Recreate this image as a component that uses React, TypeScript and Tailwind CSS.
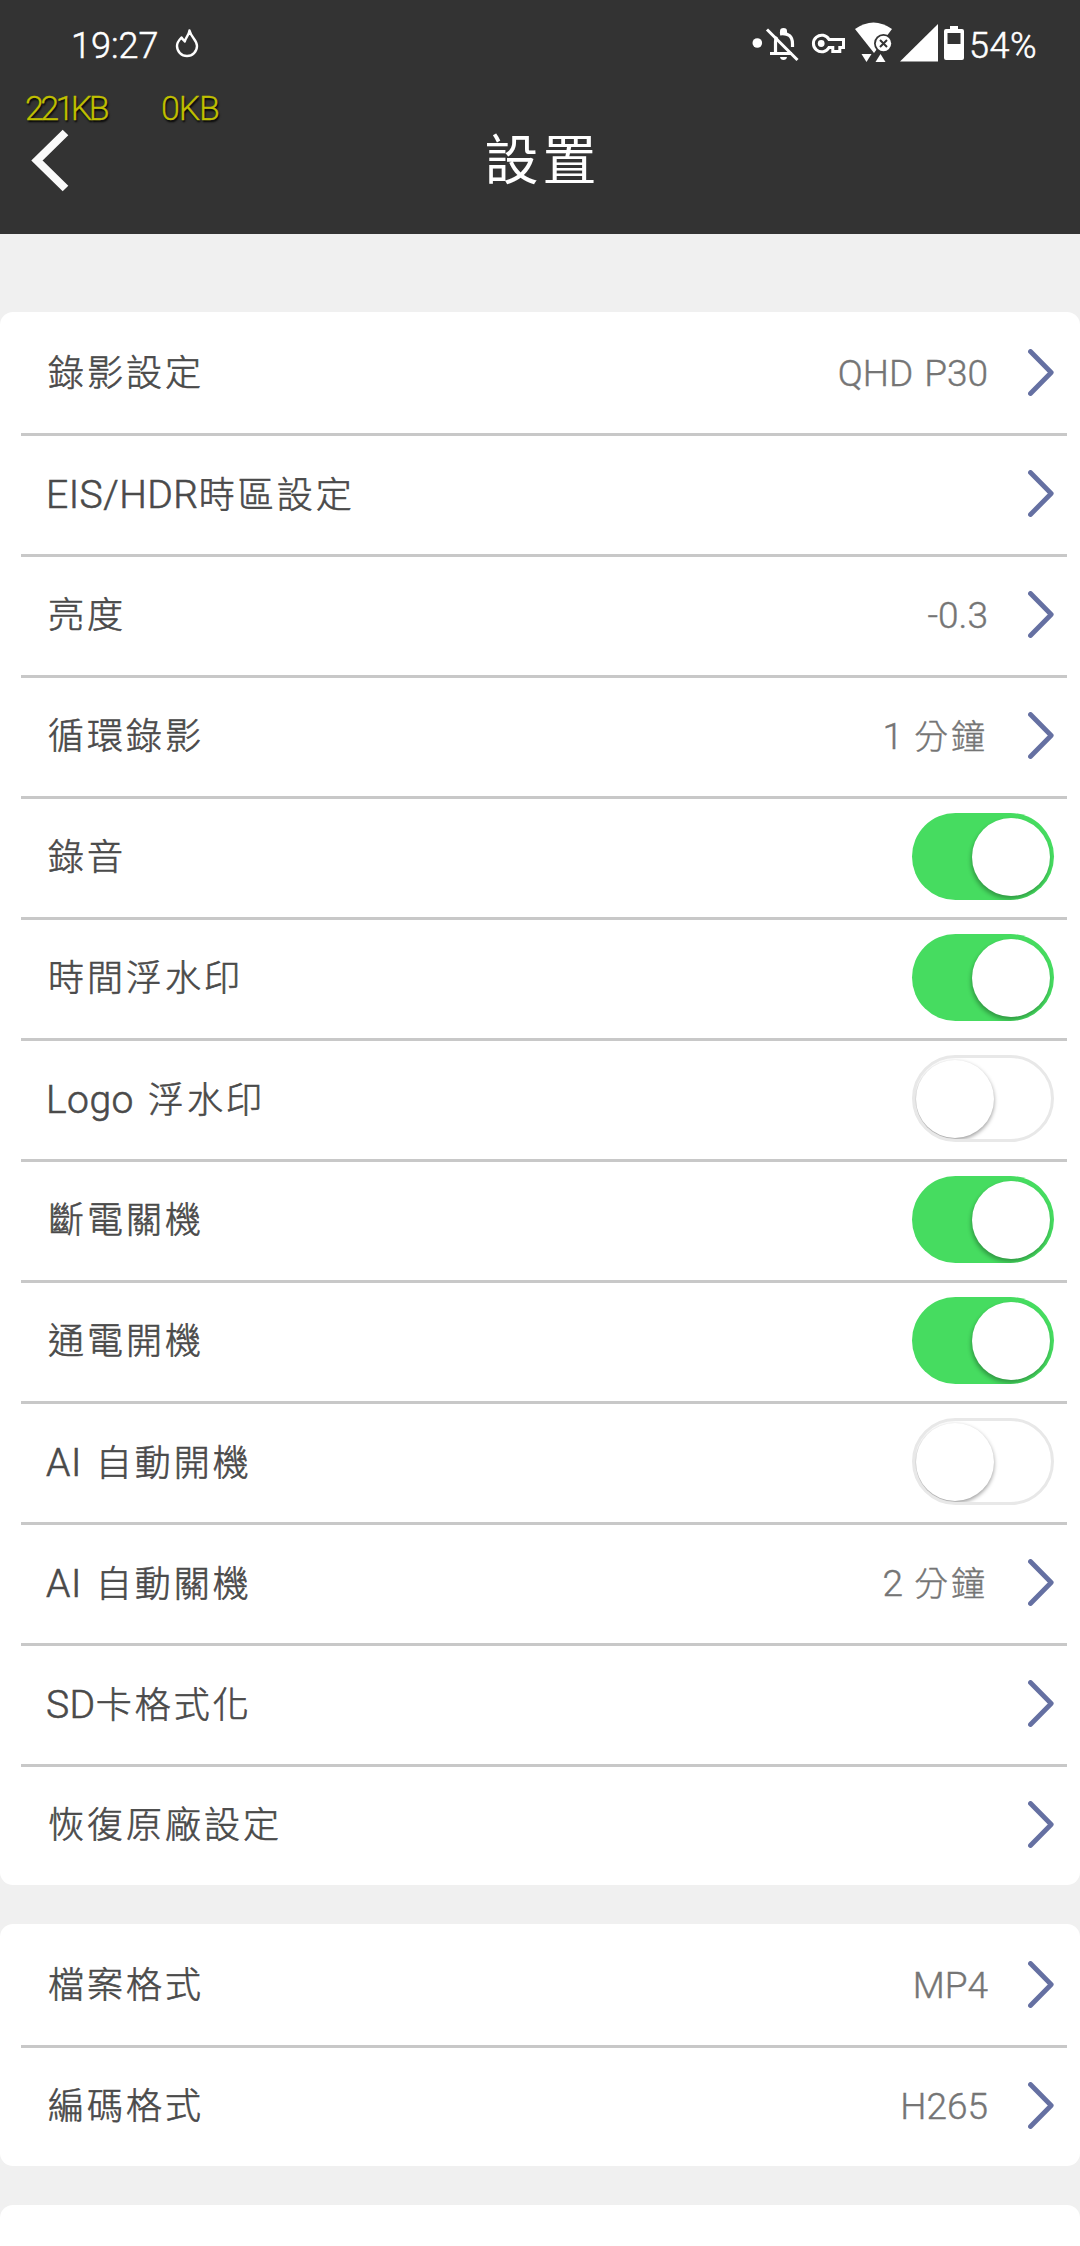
type Row = {
  label: string;
  value?: string;
  on?: boolean;
};

const recordRows: Row[] = [
  { label: "錄影設定", value: "QHD P30" },
  { label: "EIS/HDR時區設定" },
  { label: "亮度", value: "-0.3" },
  { label: "循環錄影", value: "1 分鐘" },
  { label: "錄音", on: true },
  { label: "時間浮水印", on: true },
  { label: "Logo 浮水印", on: false },
  { label: "斷電關機", on: true },
  { label: "通電開機", on: true },
  { label: "AI 自動開機", on: false },
  { label: "AI 自動關機", value: "2 分鐘" },
  { label: "SD卡格式化" },
  { label: "恢復原廠設定" },
];

const formatRows: Row[] = [
  { label: "檔案格式", value: "MP4" },
  { label: "編碼格式", value: "H265" },
];

// Latin runs are set a little larger and tighter than the CJK ones
function MixedText({
  text,
  latin,
  cjk,
}: {
  text: string;
  latin: string;
  cjk: string;
}) {
  const runs = text.match(/[\x00-\x7f]+|[^\x00-\x7f]+/g) ?? [];
  return (
    <>
      {runs.map((run, i) => (
        <span key={i} className={run.charCodeAt(0) < 128 ? latin : cjk}>
          {run}
        </span>
      ))}
    </>
  );
}

function Chevron() {
  return (
    <svg width="26" height="47" viewBox="0 0 26 47" fill="none">
      <path
        d="M2.5 2.5 23.2 23.5 2.5 44.5"
        stroke="#6570a2"
        strokeWidth="4.8"
        strokeLinecap="round"
        strokeLinejoin="round"
      />
    </svg>
  );
}

function Switch({ on }: { on: boolean }) {
  return on ? (
    <div className="flex h-[87px] w-[142px] items-center justify-end overflow-hidden rounded-full bg-[#46dc60] pr-1">
      <div className="size-[78px] rounded-full bg-white shadow-[-1px_3px_4px_rgba(0,0,0,0.3)]" />
    </div>
  ) : (
    <div className="flex h-[87px] w-[142px] items-center overflow-hidden rounded-full border-[3px] border-[#e8e8e8] bg-white pl-px">
      <div className="size-[78px] shrink-0 rounded-full bg-white shadow-[0_2px_4px_rgba(0,0,0,0.4)]" />
    </div>
  );
}

function Card({ rows }: { rows: Row[] }) {
  return (
    <section className="rounded-[13px] bg-white pr-[13px] pl-[21px]">
      {rows.map((row) => (
        <div
          key={row.label}
          className="flex h-[121px] items-center justify-between border-t-[3px] border-[#c8c8c8] pr-[13px] pb-[3px] pl-[27px] first:border-transparent"
        >
          <span className="pt-[3px] leading-none whitespace-pre text-[#4a4a4a] [-webkit-text-stroke:0.6px_#4a4a4a]">
            <MixedText
              text={row.label}
              latin="-ml-[2px] text-[39px] tracking-[0.5px] [word-spacing:4px]"
              cjk="text-[36px] tracking-[3px]"
            />
          </span>
          {row.on === undefined ? (
            <span className="flex items-center gap-[40px]">
              <span className="pt-0.5 leading-none whitespace-pre text-[#757575] [-webkit-text-stroke:0.4px_#757575]">
                <MixedText
                  text={row.value ?? ""}
                  latin="text-[37px] [word-spacing:2px]"
                  cjk="text-[34px] tracking-[3px]"
                />
              </span>
              <Chevron />
            </span>
          ) : (
            <Switch on={row.on} />
          )}
        </div>
      ))}
    </section>
  );
}

function StatusIcons() {
  return (
    <svg width="216" height="48" viewBox="750 18 216 48" fill="none">
      <circle cx="757.3" cy="43" r="4.8" fill="#fff" />
      {/* muted bell */}
      <path
        d="M775.500 53V42q0-3 1.500-5M770 53.500h22M780 33.800q12.500-1.500 12.500 10.200v3"
        stroke="#fff"
        strokeWidth="3.200"
      />
      <path d="M780 34v-3q0-3 3.500-3t3.500 3v3z" fill="#fff" />
      <path d="M780 57h7q-.5 3-3.500 3t-3.500-3z" fill="#fff" />
      <path d="m767 29.500 30.500 30.500" stroke="#fff" strokeWidth="3" />
      {/* vpn key */}
      <path
        d="M829 39.500a8.300 8.300 0 1 0 0 8h3.800v4h7v-4h3.700v-8z"
        stroke="#fff"
        strokeWidth="3"
      />
      <circle cx="821.200" cy="43.500" r="3.400" fill="#fff" />
      {/* wifi without internet */}
      <path d="M855 29q18.500-13 37 0l-18 24z" fill="#fff" />
      <circle cx="883.500" cy="43.500" r="9.500" fill="#333" />
      <circle cx="883.500" cy="43.500" r="7.700" fill="#fff" />
      <path d="m880 40 7 7m0-7-7 7" stroke="#333" strokeWidth="2" />
      <path d="M861.500 54h10l-5 8zM875.500 62h10l-5-8z" fill="#fff" />
      {/* signal and battery */}
      <path d="M900 61.500 938 24v37.500z" fill="#fff" />
      <path
        d="M946 29h4v-3h8v3h4q2 0 2 2v27q0 2-2 2h-16q-2 0-2-2V31q0-2 2-2zm1.500 4v11h13V33z"
        fill="#fff"
        fillRule="evenodd"
      />
    </svg>
  );
}

function StatusBar() {
  return (
    <div className="flex h-[84px] items-center justify-between pr-[42px] pl-[71px] text-white [-webkit-text-stroke:0.5px_#fff]">
      <div className="flex items-center gap-[16px] pt-1">
        <span className="pt-[3px] text-[36px] leading-none">19:27</span>
        <svg width="26" height="32" viewBox="0 0 26 32" fill="none">
          <path
            d="M15.500 2.500C15 7 12 9 10.800 13.500 9.500 12 8.500 11 7.500 9.500 5 12 3 14.500 3 18a10 10 0 0 0 20 0c0-6-5.500-8-7.500-15.500Z"
            stroke="#fff"
            strokeWidth="2.400"
            strokeLinejoin="round"
          />
        </svg>
      </div>
      <div className="flex items-center">
        <StatusIcons />
        <span className="w-[72px] pt-[7px] pl-[3px] text-[36px] leading-none tracking-[0.5px]">
          54%
        </span>
      </div>
    </div>
  );
}

export default function App() {
  return (
    <div className="relative h-[2246px] w-[1080px] overflow-hidden bg-[#f0f0f0] font-['Roboto','Noto_Sans_CJK_TC',sans-serif] font-light">
      <header className="h-[234px] bg-[#333]">
        <StatusBar />
        <div className="grid h-[150px] grid-cols-[1fr_auto_1fr] items-start">
          <svg
            className="mt-[45px] ml-[31px]"
            width="38"
            height="63"
            viewBox="0 0 38 63"
            fill="none"
          >
            <path d="M34.500 3.500 6 31.500l28.500 28" stroke="#fafafa" strokeWidth="8" />
          </svg>
          <h1 className="mt-[51px] pl-[5px] text-[54px] leading-none font-normal tracking-[4px] text-white">
            設置
          </h1>
        </div>
      </header>

      {/* traffic meter floats over the header */}
      <div className="absolute top-[91px] left-[25px] flex text-[34px] leading-none text-[#c0c000] [-webkit-text-stroke:0.3px_#c0c000] [text-shadow:1px_2px_2px_#000]">
        <span className="w-[136px] tracking-[-3.6px]">221KB</span>
        <span className="tracking-[-1.2px]">0KB</span>
      </div>

      <main className="flex flex-col gap-[39px] pt-[78px]">
        <Card rows={recordRows} />
        <Card rows={formatRows} />
        <section className="h-[120px] rounded-[13px] bg-white" />
      </main>
    </div>
  );
}
